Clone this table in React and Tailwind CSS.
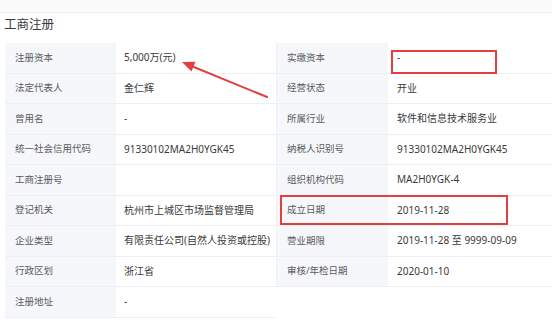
import React from "react";

const rows = [
  ["注册资本", "5,000万(元)", "实缴资本", "-"],
  ["法定代表人", "金仁辉", "经营状态", "开业"],
  ["曾用名", "-", "所属行业", "软件和信息技术服务业"],
  ["统一社会信用代码", "91330102MA2H0YGK45", "纳税人识别号", "91330102MA2H0YGK45"],
  ["工商注册号", "", "组织机构代码", "MA2H0YGK-4"],
  ["登记机关", "杭州市上城区市场监督管理局", "成立日期", "2019-11-28"],
  ["企业类型", "有限责任公司(自然人投资或控股)", "营业期限", "2019-11-28 至 9999-09-09"],
  ["行政区划", "浙江省", "审核/年检日期", "2020-01-10"],
  ["注册地址", "-", null, null],
];

export default function App() {
  return (
    <div
      className="relative w-[552px] h-[320px] overflow-hidden bg-white"
      style={{ fontFamily: '"Noto Sans", "Noto Sans CJK SC", sans-serif' }}
    >
      <div className="h-[12px] bg-[#fbfbfc]" />
      <div className="border-t border-[#eef0f3] h-[31px] flex items-center pb-[6px] pl-[4px] text-[12.5px] text-[#3a3a3a]">
        工商注册
      </div>
      <div className="ml-[5px] flex flex-col">
        {rows.map((r, i) => (
          <div key={i} className="flex h-[30.5px]">
            <div className="w-[111px] shrink-0 bg-[#f5f7fb] border-b border-[#eceff4] flex items-center pl-[10px] text-[9.5px] text-[#5a5a5a]">
              {r[0]}
            </div>
            <div className="w-[160px] shrink-0 bg-white border-b border-[#eceff4] flex items-center pl-[8px] text-[10px] text-[#3a3a3a]">
              {r[1]}
            </div>
            {r[2] !== null ? (
              <>
                <div className="w-[112px] shrink-0 bg-[#f5f7fb] border-b border-l border-[#eceff4] flex items-center pl-[10px] text-[9.5px] text-[#5a5a5a]">
                  {r[2]}
                </div>
                <div className="flex-1 bg-white border-b border-[#eceff4] flex items-center pl-[9px] text-[10px] text-[#3a3a3a]">
                  {r[3]}
                </div>
              </>
            ) : (
              <div className="flex-1" />
            )}
          </div>
        ))}
      </div>

      <div className="absolute left-[391px] top-[50px] w-[106px] h-[24px] border-2 border-[#e2403f]" />
      <div className="absolute left-[280px] top-[195px] w-[228px] h-[30px] border-2 border-[#e2403f]" />
      <svg className="absolute left-0 top-0" width="552" height="320" viewBox="0 0 552 320">
        <line x1="267" y1="97" x2="192" y2="66.2" stroke="#e2403f" strokeWidth="2" strokeLinecap="round" />
        <polygon points="182,62 195.5,61.8 191.5,71.5" fill="#e2403f" />
      </svg>
    </div>
  );
}
